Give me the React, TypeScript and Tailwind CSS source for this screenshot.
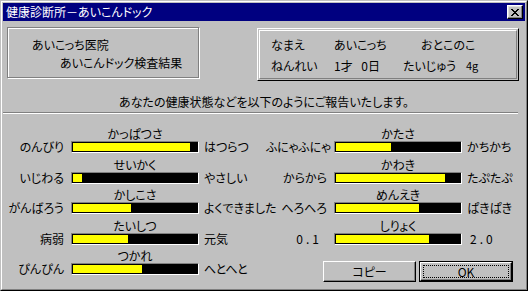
const face = "font-['Noto_Sans_CJK_JP','Liberation_Sans',sans-serif] [font-feature-settings:'palt']";

interface MeterProps {
  top: string;
  left: string;
  right: string;
  value: number;
  className?: string;
  leftClass?: string;
  rightClass?: string;
}

function Meter({ top, left, right, value, className = "", leftClass = "", rightClass = "" }: MeterProps) {
  return (
    <div className={className}>
      <div className="flex h-[14px]">
        <div className="w-[68px] shrink-0" />
        <div className="w-[128px] text-center leading-[14px] whitespace-nowrap">{top}</div>
      </div>
      <div className="flex h-[12px] items-center leading-[12px]">
        <div className={`w-[61px] shrink-0 text-right whitespace-nowrap ${leftClass}`}>{left}</div>
        <div className="ml-[7px] h-[12px] w-[128px] shrink-0 border border-t-[#808080] border-l-[#808080] border-r-white border-b-white bg-black p-px">
          <div className="h-full bg-[#ffff00]" style={{ width: `${value}%` }} />
        </div>
        <div className={`ml-[5px] whitespace-nowrap ${rightClass}`}>{right}</div>
      </div>
    </div>
  );
}

function CloseGlyph() {
  // 8x7 pixel cross like the old title bar button
  const px = [
    [0, 0], [1, 0], [6, 0], [7, 0],
    [1, 1], [2, 1], [5, 1], [6, 1],
    [2, 2], [3, 2], [4, 2], [5, 2],
    [3, 3], [4, 3],
    [2, 4], [3, 4], [4, 4], [5, 4],
    [1, 5], [2, 5], [5, 5], [6, 5],
    [0, 6], [1, 6], [6, 6], [7, 6],
  ];
  return (
    <svg width="8" height="7" viewBox="0 0 8 7" shapeRendering="crispEdges">
      {px.map(([x, y], i) => (
        <rect key={i} x={x} y={y} width="1" height="1" fill="#000" />
      ))}
    </svg>
  );
}

export default function App() {
  return (
    <div className={`${face} h-[291px] w-[528px] bg-[#c0c0c0] text-[12px] text-black`}>
      <div className="h-full border border-[#c0c0c0] border-r-black border-b-black">
        <div className="h-full border border-white border-r-[#808080] border-b-[#808080] p-px">
          {/* title bar */}
          <div className="flex h-[18px] items-center bg-[#000080] pl-[3px] pr-[2px] text-white">
            <span className="leading-[18px] whitespace-nowrap">健康診断所－あいこんドック</span>
            <button className="ml-auto flex h-[14px] w-[16px] items-center justify-center border border-white border-r-black border-b-black bg-[#c0c0c0] shadow-[inset_-1px_-1px_0_#808080,inset_1px_1px_0_#dfdfdf]">
              <CloseGlyph />
            </button>
          </div>

          {/* header boxes */}
          <div className="flex items-start">
            <div className="mt-[6px] ml-[4px] h-[51px] w-[192px] border border-[#808080] pt-[8px] leading-[18px] shadow-[inset_1px_1px_0_#fff,1px_1px_0_#fff]">
              <div className="pl-[24px]">あいこっち医院</div>
              <div className="pl-[52px]">あいこんドック検査結果</div>
            </div>
            <div className="mt-[7px] ml-[58px] h-[53px] w-[262px] border border-white border-r-black border-b-black p-px">
              <div className="h-full border border-white border-r-[#808080] border-b-[#808080] pt-[3px] pl-[11px] leading-[21px]">
                <div className="flex whitespace-nowrap">
                  <span className="w-[63px]">なまえ</span>
                  <span className="w-[87px]">あいこっち</span>
                  <span>おとこのこ</span>
                </div>
                <div className="flex whitespace-nowrap">
                  <span className="w-[63px]">ねんれい</span>
                  <span className="w-[69px] [word-spacing:6px]">1才 0日</span>
                  <span className="w-[63px]">たいじゅう</span>
                  <span className="text-[11px]">4g</span>
                </div>
              </div>
            </div>
          </div>

          <div className="mt-[14px] h-[14px] text-center leading-[14px] whitespace-nowrap">
            あなたの健康状態などを以下のようにご報告いたします。
          </div>
          <div className="mt-[3px] h-[2px] w-[515px] border-t border-b border-t-[#808080] border-b-white" />

          {/* meters */}
          <div className="mt-[13px] flex">
            <div className="w-[263px] shrink-0">
              <Meter top="かっぱつさ" left="のんびり" right="はつらつ" value={94} />
              <Meter className="mt-[5px]" top="せいかく" left="いじわる" right="やさしい" value={7} />
              <Meter className="mt-[4px]" top="かしこさ" left="がんばろう" right="よくできました" value={47} />
              <Meter className="mt-[5px]" top="たいしつ" left="病弱" right="元気" value={44} />
              <Meter className="mt-[4px]" top="つかれ" left="ぴんぴん" right="へとへと" value={56} />
            </div>
            <div className="flex-1">
              <Meter top="かたさ" left="ふにゃふにゃ" right="かちかち" value={44} />
              <Meter className="mt-[5px]" top="かわき" left="からから" right="たぷたぷ" value={88} />
              <Meter className="mt-[4px]" top="めんえき" left="へろへろ" right="ぱきぱき" value={67} />
              <Meter
                className="mt-[5px]"
                top="しりょく"
                left="0.1"
                right="2.0"
                value={75}
                leftClass="pr-[5px] tracking-[3px]"
                rightClass="pl-[3px] tracking-[3px]"
              />
              <div className="mt-[16px] ml-[57px] flex gap-[3px]">
                <button className="h-[21px] w-[93px] border border-white border-r-black border-b-black bg-[#c0c0c0] leading-[19px] shadow-[inset_-1px_-1px_0_#808080]">
                  コピー
                </button>
                <button className="h-[21px] w-[94px] border border-black bg-[#c0c0c0] p-0">
                  <div className="h-full border border-white border-r-black border-b-black p-[2px] shadow-[inset_-1px_-1px_0_#808080]">
                    <div className="flex h-full items-center justify-center border border-dotted border-black leading-[11px]">
                      OK
                    </div>
                  </div>
                </button>
              </div>
            </div>
          </div>
        </div>
      </div>
    </div>
  );
}
